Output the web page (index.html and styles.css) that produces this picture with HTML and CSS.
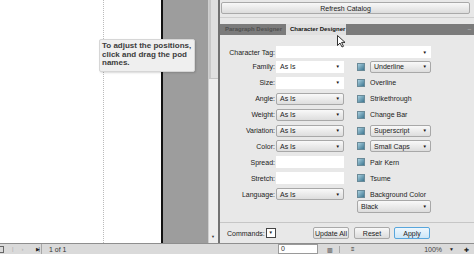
FILE: index.html
```html
<!DOCTYPE html>
<html lang="en">
<head>
    <meta charset="UTF-8">
    <title>Character Designer</title>
    <link rel="stylesheet" href="styles.css">
</head>
<body>
    <div class="app">
        <div class="main">
            <div class="page">
                <div class="guide"></div>
                <div class="tooltip">To adjust the positions, click and drag the pod names.</div>
            </div>
            <div class="pasteboard"></div>
            <div class="vscroll">
                <div class="thumb"></div>
                <span class="arrow">&#9660;</span>
            </div>

            <div class="panel">
                <div class="catalog">
                    <button class="btn wide">Refresh Catalog</button>
                </div>
                <div class="tabs">
                    <span class="tab">Paragraph Designer</span>
                    <span class="tab active">Character Designer</span>
                    <span class="tab-menu">&#8211;</span>
                    <svg class="cursor" width="9" height="13" viewBox="0 0 9 13">
                        <path d="M0.5 0.5 L0.5 10.5 L3 8 L5 12 L6.5 11.3 L4.6 7.4 L8 7.4 Z" fill="#fff" stroke="#000" stroke-width="0.8"/>
                    </svg>
                </div>

                <div class="form">
                    <div class="tag-row">
                        <label>Character Tag:</label>
                        <div class="combo white long"><span></span><i>&#9660;</i></div>
                    </div>

                    <div class="cols">
                        <div class="col-left">
                            <div class="row"><label>Family:</label><div class="combo white"><span>As Is</span><i>&#9660;</i></div></div>
                            <div class="row"><label>Size:</label><div class="combo white"><span></span><i>&#9660;</i></div></div>
                            <div class="row"><label>Angle:</label><div class="combo"><span>As Is</span><i>&#9660;</i></div></div>
                            <div class="row"><label>Weight:</label><div class="combo"><span>As Is</span><i>&#9660;</i></div></div>
                            <div class="row"><label>Variation:</label><div class="combo"><span>As Is</span><i>&#9660;</i></div></div>
                            <div class="row"><label>Color:</label><div class="combo"><span>As Is</span><i>&#9660;</i></div></div>
                            <div class="row"><label>Spread:</label><div class="field"></div></div>
                            <div class="row"><label>Stretch:</label><div class="field"></div></div>
                            <div class="row"><label>Language:</label><div class="combo"><span>As Is</span><i>&#9660;</i></div></div>
                        </div>
                        <div class="col-right">
                            <div class="row"><b class="check"></b><div class="combo small"><span>Underline</span><i>&#9660;</i></div></div>
                            <div class="row"><b class="check"></b><span class="opt">Overline</span></div>
                            <div class="row"><b class="check"></b><span class="opt">Strikethrough</span></div>
                            <div class="row"><b class="check"></b><span class="opt">Change Bar</span></div>
                            <div class="row"><b class="check"></b><div class="combo small"><span>Superscript</span><i>&#9660;</i></div></div>
                            <div class="row"><b class="check"></b><div class="combo small"><span>Small Caps</span><i>&#9660;</i></div></div>
                            <div class="row"><b class="check"></b><span class="opt">Pair Kern</span></div>
                            <div class="row"><b class="check"></b><span class="opt">Tsume</span></div>
                            <div class="row"><b class="check"></b><span class="opt">Background Color</span></div>
                            <div class="bg-row"><div class="combo black"><span>Black</span><i>&#9660;</i></div></div>
                        </div>
                    </div>
                </div>

                <div class="commands">
                    <label>Commands:</label>
                    <span class="cmd-drop">&#9660;</span>
                    <span class="spacer"></span>
                    <button class="btn">Update All</button>
                    <button class="btn">Reset</button>
                    <button class="btn apply">Apply</button>
                </div>
            </div>
        </div>

        <div class="statusbar">
            <div class="nav">
                <span class="ico box"></span>
                <span class="ico dim">|</span>
                <span class="ico dim">&#8250;</span>
                <span class="ico last">&#9654;|</span>
            </div>
            <span class="pages">1 of 1</span>
            <span class="zero">0</span>
            <span class="ico grid">&#9637;</span>
            <span class="ico lines">&#8801;</span>
            <span class="spacer"></span>
            <span class="zoom">100%</span>
            <span class="ico down">&#9660;</span>
            <span class="ico plus">&#10010;</span>
        </div>
    </div>
</body>
</html>
```

FILE: styles.css
```css
body {
    margin: 0;
    font-family: "Liberation Sans", Arial, sans-serif;
    background-color: #fff;
}

.app {
    width: 474px;
    height: 254px;
    display: flex;
    flex-direction: column;
    overflow: hidden;
}

.main {
    display: flex;
    height: 243px;
}

/* document area */
.page {
    position: relative;
    width: 161px;
    background-color: #fff;
    border-right: 2px solid #111;
}

.guide {
    position: absolute;
    left: 103px;
    top: 0;
    bottom: 0;
    border-left: 1px dotted #bbb;
}

.tooltip {
    position: absolute;
    left: 99px;
    top: 39px;
    width: 91px;
    padding: 2px 1px 3px 2px;
    background-color: #efefef;
    border: 1px solid #d6d6d6;
    border-radius: 2px;
    box-shadow: 1px 1px 2px rgba(0, 0, 0, 0.15);
    font-size: 8px;
    font-weight: bold;
    line-height: 8.5px;
    color: #3c3c3c;
    z-index: 2;
}

.pasteboard {
    width: 45px;
    background-color: #9d9d9d;
}

.vscroll {
    position: relative;
    width: 9px;
    background-color: #ededed;
    border-left: 1px solid #cfcfcf;
}

.vscroll .thumb {
    height: 78px;
    background-color: #e0e0e0;
    border-left: 2px solid #c8c8c8;
    border-bottom: 1px solid #c4c4c4;
}

.vscroll .arrow {
    position: absolute;
    bottom: 4px;
    left: 2px;
    font-size: 4px;
    color: #333;
}

/* panel */
.panel {
    flex: 1;
    display: flex;
    flex-direction: column;
    background-color: #e8e8e8;
    border-left: 2px solid #727272;
    font-size: 7px;
    color: #222;
}

.catalog {
    height: 15px;
    padding: 2px 4px 0 1px;
    border-bottom: 1px solid #cfcfcf;
}

.btn {
    font-family: inherit;
    font-size: 7px;
    color: #222;
    height: 12px;
    padding: 0;
    white-space: nowrap;
    border: 1px solid #a9a9a9;
    border-radius: 2px;
    background: linear-gradient(#f8f8f8, #dcdcdc);
}

.btn.wide {
    width: 100%;
}

.tabs {
    position: relative;
    display: flex;
    align-items: stretch;
    height: 11px;
    margin-top: 6px;
    background-color: #7b7b7b;
}

.tab {
    width: 61px;
    padding-left: 5px;
    font-size: 6px;
    font-weight: bold;
    line-height: 11px;
    white-space: nowrap;
    color: #505050;
}

.tab.active {
    width: 56px;
    padding-left: 4px;
    background-color: #e0e0e0;
    color: #111;
}

.tab-menu {
    margin-left: auto;
    padding-right: 3px;
    font-size: 6px;
    line-height: 11px;
    color: #c8c8c8;
}

.cursor {
    position: absolute;
    left: 117px;
    top: 11px;
}

.form {
    flex: 1;
    padding-top: 11px;
}

.tag-row {
    display: flex;
    align-items: center;
    height: 12px;
}

label {
    display: inline-block;
    text-align: right;
    white-space: nowrap;
    color: #222;
}

.tag-row label,
.col-left label {
    width: 55px;
    padding-right: 1px;
}

.cols {
    display: flex;
    margin-top: 1px;
}

.col-left {
    width: 137px;
}

.row {
    display: flex;
    align-items: center;
    height: 15.9px;
}

.bg-row {
    margin-top: -2px;
}

.combo {
    display: flex;
    align-items: center;
    justify-content: space-between;
    width: 68px;
    height: 12px;
    box-sizing: border-box;
    padding: 0 3px;
    white-space: nowrap;
    border: 1px solid #a8a8a8;
    border-radius: 2px;
    background: linear-gradient(#f9f9f9, #dddddd);
}

.combo.white {
    background: #fff;
    border-color: #fff;
    border-radius: 0;
}

.combo.long {
    width: 155px;
}

.combo.small {
    width: 61px;
}

.combo.black {
    width: 74px;
    height: 13px;
}

.combo i {
    font-style: normal;
    font-size: 4.5px;
    color: #111;
}

.field {
    width: 68px;
    height: 12px;
    background-color: #fff;
}

.check {
    display: inline-block;
    width: 6px;
    height: 6px;
    margin-right: 5px;
    border: 1px solid #6a8a98;
    background: linear-gradient(135deg, #a9d0e0, #3d7690);
}

.opt {
    color: #222;
    white-space: nowrap;
}

.commands {
    display: flex;
    align-items: center;
    height: 20px;
    padding: 0 44px 0 7px;
    border-top: 1px solid #c6c6c6;
}

.cmd-drop {
    width: 8px;
    height: 8px;
    margin-left: 1px;
    font-size: 4.5px;
    line-height: 8px;
    text-align: center;
    background-color: #fff;
    border: 1px solid #444;
}

.commands .btn {
    width: 36px;
    margin-left: 5px;
}

.commands .btn.apply {
    margin-left: 4px;
    border-color: #58a6dc;
    background: linear-gradient(#eef7fd, #cde6f7);
}

.spacer {
    flex: 1;
}

/* status bar */
.statusbar {
    display: flex;
    align-items: center;
    height: 10px;
    border-top: 1px solid #8e8e8e;
    background-color: #dadada;
    font-size: 7px;
    color: #333;
}

.nav {
    display: flex;
    align-items: center;
    width: 41px;
    height: 10px;
    border-right: 1px solid #a8a8a8;
}

.ico {
    font-size: 6px;
    color: #222;
}

.ico.dim {
    margin-left: 8px;
    color: #aaa;
}

.ico.box {
    width: 3px;
    height: 5px;
    border: 1px solid #666;
    border-left: none;
}

.ico.last {
    margin-left: 12px;
    font-size: 5px;
    letter-spacing: -1px;
}

.pages {
    width: 229px;
    margin-left: 7px;
}

.zero {
    width: 36px;
    height: 8px;
    padding-left: 2px;
    line-height: 8px;
    background-color: #fff;
    border: 1px solid #9a9a9a;
}

.grid {
    margin-left: 9px;
    padding-right: 6px;
    border-right: 1px solid #a8a8a8;
}

.lines {
    margin-left: 11px;
}

.zoom {
    color: #444;
}

.down {
    margin-left: 7px;
    font-size: 5px;
}

.plus {
    margin: 0 5px 0 10px;
}
```
